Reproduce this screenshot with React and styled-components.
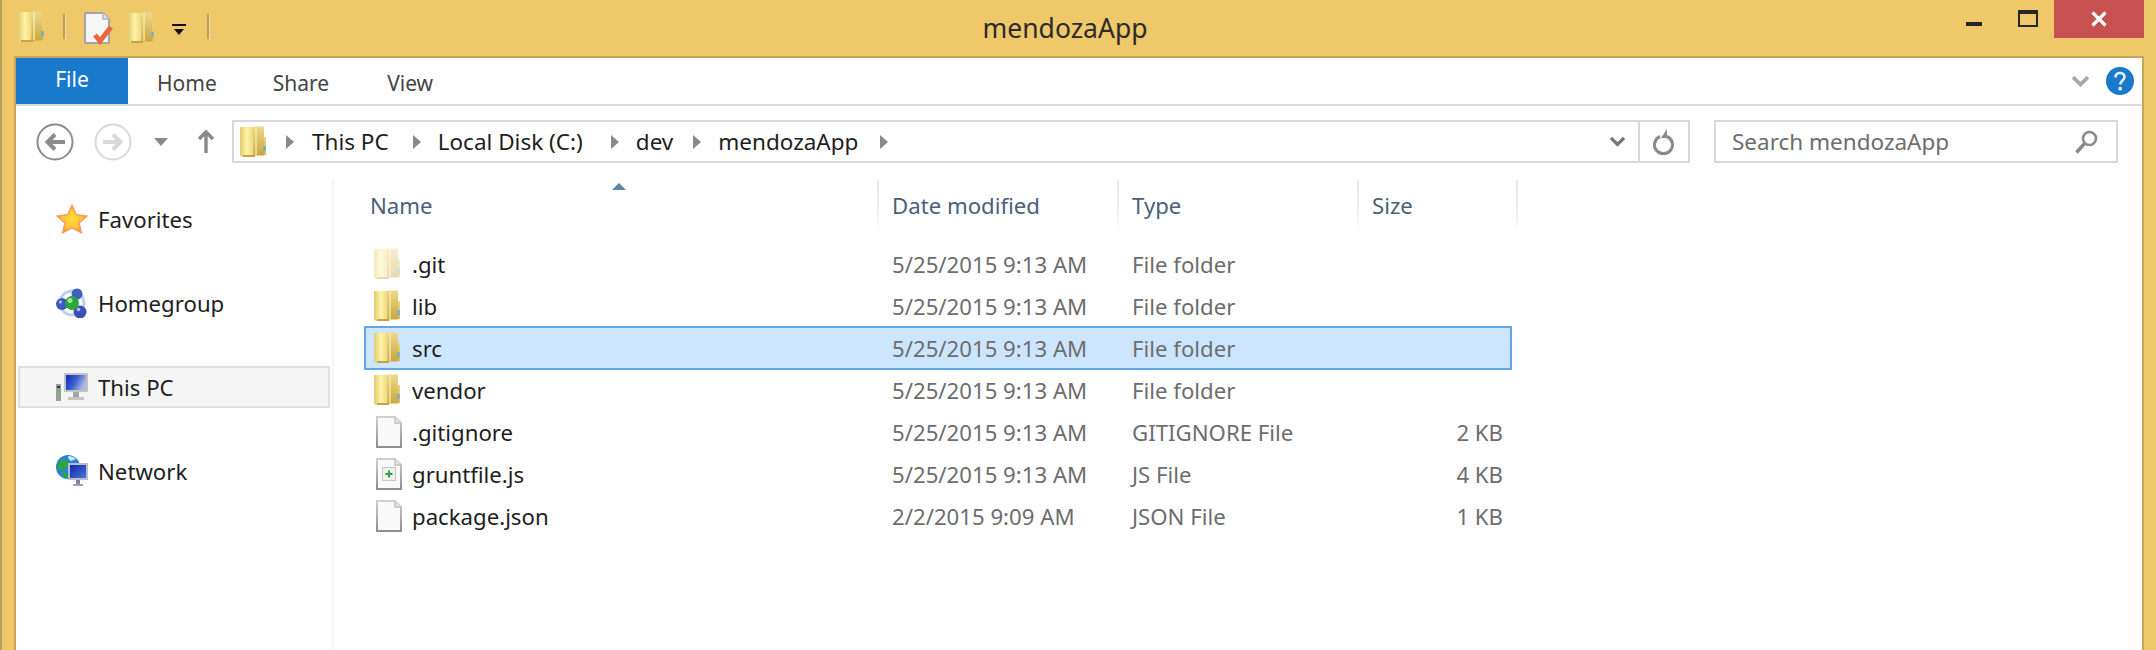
import React from "react";
import styled, { createGlobalStyle } from "styled-components";

const UI_FONT = `"Noto Sans", "Open Sans", "Liberation Sans", sans-serif`;

const GlobalStyle = createGlobalStyle`
  html, body {
    margin: 0;
    padding: 0;
    background: #efc86a;
  }
  body {
    font-family: ${UI_FONT};
  }
`;

const Window = styled.div`
  width: 2156px;
  height: 650px;
  box-sizing: border-box;
  display: flex;
  flex-direction: column;
  overflow: hidden;
  background: #efc86a;
  border-left: 2px solid #b9a05a;
`;

const TitleBar = styled.div`
  height: 56px;
  flex: none;
  display: grid;
  grid-template-columns: 803px 520px 1fr;
  align-items: start;
`;

const QuickAccess = styled.div`
  display: flex;
  align-items: flex-start;
  height: 56px;
  padding-left: 16px;
`;

const QuickSep = styled.div`
  width: 2px;
  height: 25px;
  background: #b99f5c;
  box-shadow: 1px 0 0 #f5dc9d;
  margin: 14px ${(p) => p.$right}px 0 ${(p) => p.$left}px;
`;

const QuickIcon = styled.div`
  display: flex;
  margin-top: ${(p) => p.$top}px;
  margin-left: ${(p) => p.$left || 0}px;
`;

const Title = styled.div`
  font-size: 26.5px;
  line-height: 56px;
  text-align: center;
  color: #2b2b2b;
`;

const WindowControls = styled.div`
  display: flex;
  justify-content: flex-end;
  align-items: flex-start;
  padding-right: 12px;
`;

const MinButton = styled.div`
  width: 16px;
  height: 4px;
  background: #262626;
  margin: 22px 36px 0 0;
`;

const MaxButton = styled.div`
  width: 20px;
  height: 17px;
  box-sizing: border-box;
  background: transparent;
  border: 2px solid #262626;
  border-top-width: 4px;
  margin: 10px 16px 0 0;
`;

const CloseButton = styled.div`
  width: 90px;
  height: 38px;
  background: #c75050;
  display: flex;
  align-items: center;
  justify-content: center;
`;

const Pane = styled.div`
  flex: 1;
  min-height: 0;
  margin: 0 12px;
  display: flex;
  flex-direction: column;
  background: #fff;
  border: 2px solid #c8a657;
  border-bottom: none;
`;

const TabRow = styled.div`
  height: 46px;
  flex: none;
  display: flex;
  align-items: stretch;
  border-bottom: 2px solid #dadbdc;
`;

const FileTab = styled.div`
  width: 112px;
  background: #1979ca;
  color: #fff;
  font-size: 21px;
  display: flex;
  align-items: center;
  justify-content: center;
  padding-bottom: 4px;
  box-sizing: border-box;
`;

const Tab = styled.div`
  color: #444;
  font-size: 21px;
  line-height: 50px;
  margin-left: ${(p) => p.$gap}px;
`;

const RibbonEnd = styled.div`
  margin-left: auto;
  display: flex;
  align-items: center;
  gap: 17px;
  padding: 0 8px 0 0;
`;

const NavRow = styled.div`
  height: 74px;
  flex: none;
  box-sizing: border-box;
  padding: 14px 24px 0 20px;
  display: flex;
  align-items: flex-start;
`;

const NavButtons = styled.div`
  width: 196px;
  height: 43px;
  flex: none;
  display: flex;
  align-items: center;
`;

const Spacer = styled.span`
  width: ${(p) => p.$w}px;
  flex: none;
`;

const AddressBar = styled.div`
  flex: 1;
  height: 43px;
  box-sizing: border-box;
  border: 2px solid #d9d9d9;
  display: flex;
  align-items: center;
  padding-left: 6px;
  color: #1e1e1e;
  font-size: 22.5px;
`;

const Crumb = styled.span`
  margin: 0 ${(p) => p.$after}px 0 ${(p) => p.$before}px;
  white-space: nowrap;
`;

const AddressEnd = styled.div`
  margin-left: auto;
  display: flex;
  align-items: center;
  height: 100%;
`;

const RefreshCell = styled.div`
  width: 50px;
  height: 100%;
  border-left: 2px solid #d9d9d9;
  box-sizing: border-box;
  display: flex;
  align-items: center;
  justify-content: center;
`;

const SearchBox = styled.div`
  width: 404px;
  height: 43px;
  flex: none;
  margin-left: 24px;
  box-sizing: border-box;
  border: 2px solid #d9d9d9;
  padding: 0 18px 0 16px;
  display: flex;
  align-items: center;
  justify-content: space-between;
  color: #6d6d6d;
  font-size: 22.5px;
`;

const Body = styled.div`
  flex: 1;
  min-height: 0;
  display: flex;
`;

const Sidebar = styled.div`
  width: 316px;
  flex: none;
  box-sizing: content-box;
  border-right: 2px solid #f5f6f7;
  padding-top: 18px;
  display: flex;
  flex-direction: column;
  gap: 42px;
`;

const NavItem = styled.div`
  height: 42px;
  width: 312px;
  margin-left: 2px;
  box-sizing: border-box;
  padding-left: 36px;
  display: flex;
  align-items: center;
  gap: 10px;
  color: #1e1e1e;
  font-size: 22.2px;
  background: ${(p) => (p.$active ? "#f5f5f5" : "transparent")};
  border: 2px solid ${(p) => (p.$active ? "#dfdfdf" : "transparent")};
`;

const Content = styled.div`
  flex: 1;
  min-width: 0;
`;

const HeaderRow = styled.div`
  height: 44px;
  display: grid;
  grid-template-columns: 545px 240px 240px 159px;
  margin-bottom: 19px;
`;

const HeaderCell = styled.div`
  position: relative;
  box-sizing: border-box;
  padding-left: ${(p) => p.$pad}px;
  color: #4c607a;
  font-size: 22.2px;
  line-height: 52px;
  border-right: 2px solid transparent;
  border-image: linear-gradient(to bottom, #e3e8ef, #eef2f7 70%, #ffffff) 1;
`;

const SortArrow = styled.div`
  position: absolute;
  left: 278px;
  top: 3px;
  width: 0;
  height: 0;
  border-left: 7px solid transparent;
  border-right: 7px solid transparent;
  border-bottom: 7px solid #5d87a8;
`;

const FileRow = styled.div`
  width: 1148px;
  margin: ${(p) => (p.$selected ? "-1px 0 -1px 30px" : "0 0 0 30px")};
  height: ${(p) => (p.$selected ? 44 : 42)}px;
  box-sizing: border-box;
  display: grid;
  grid-template-columns: 528px 240px 240px 131px;
  align-items: center;
  background: ${(p) => (p.$selected ? "#cde6ff" : "transparent")};
  box-shadow: ${(p) => (p.$selected ? "inset 0 0 0 2px #64a5e6" : "none")};
  font-size: 22.2px;
`;

const NameCell = styled.div`
  display: flex;
  align-items: center;
  padding-left: ${(p) => p.$pad}px;
  color: #1e1e1e;
`;

const IconSlot = styled.span`
  width: ${(p) => 38 - (p.$pad - 10)}px;
  display: flex;
  flex: none;
`;

const MetaCell = styled.div`
  color: #6d6d6d;
  white-space: nowrap;
`;

const SizeCell = styled.div`
  color: #6d6d6d;
  text-align: right;
`;

const FolderIcon = ({ faded }) => (
  <svg width="26" height="32" viewBox="0 0 26 32" style={{ display: "block", opacity: faded ? 0.42 : 1 }}>
    <defs>
      <linearGradient id="leafGrad" x1="0" x2="1" y1="0" y2="0">
        <stop offset="0" stopColor="#e2cb6e" />
        <stop offset="0.5" stopColor="#fff3a6" />
        <stop offset="1" stopColor="#efd67c" />
      </linearGradient>
      <linearGradient id="midGrad" x1="0" x2="0" y1="0" y2="1">
        <stop offset="0" stopColor="#ecd98c" />
        <stop offset="1" stopColor="#c9a63f" />
      </linearGradient>
      <linearGradient id="tabGrad" x1="0" x2="0" y1="0" y2="1">
        <stop offset="0" stopColor="#efd47a" />
        <stop offset="1" stopColor="#d8b750" />
      </linearGradient>
    </defs>
    <path d="M23 11h3v18h-3z" fill="url(#tabGrad)" />
    <path d="M13 0.500h11v29H13z" fill="url(#midGrad)" />
    <path d="M15 1h2v28h-2z" fill="#f7e9a8" opacity="0.7" />
    <path d="M0 1h13.500v29.500l-11 0.500L0 30z" fill="url(#leafGrad)" />
    <rect x="23.500" y="20" width="2" height="5" fill="#5aaede" />
    <rect x="3" y="29" width="12" height="2" fill="#c4a448" />
  </svg>
);

const FileIcon = ({ script }) => (
  <svg width="26" height="32" viewBox="0 0 26 32" style={{ display: "block" }}>
    <defs>
      <linearGradient id="docEdge" x1="0" x2="0" y1="0" y2="1">
        <stop offset="0" stopColor="#cfcfcf" />
        <stop offset="1" stopColor="#8e8e8e" />
      </linearGradient>
    </defs>
    <path d="M1 1h18l6 6v24H1z" fill="#f9f9f9" stroke="url(#docEdge)" strokeWidth="2" />
    <path d="M19 1v6h6" fill="#e6e6e6" stroke="#c4c4c4" strokeWidth="1.500" />
    {script && (
      <g>
        <rect x="6.500" y="9.500" width="13" height="13" fill="#f1f1f1" stroke="#c6c6c6" />
        <path d="M12 12.500h2v2.500h2.500v2H14v2.500h-2V17H9.500v-2H12z" fill="#25a83c" />
      </g>
    )}
  </svg>
);

const NoteIcon = () => (
  <svg width="30" height="33" viewBox="0 0 30 33" style={{ display: "block" }}>
    <path d="M1 1h18l6 6v24H1z" fill="#f6f6f6" stroke="#a5a5a5" strokeWidth="2" />
    <path d="M19 1v6h6" fill="#e6e6e6" stroke="#b5b5b5" strokeWidth="1.500" />
    <path d="M11 23l5 6 11-14" fill="none" stroke="#e7673f" strokeWidth="5" />
  </svg>
);

const StarIcon = () => (
  <svg width="32" height="30" viewBox="0 0 32 30" style={{ flex: "none" }}>
    <defs>
      <radialGradient id="starGrad" cx="0.5" cy="0.5" r="0.55">
        <stop offset="0" stopColor="#ffe13c" />
        <stop offset="0.6" stopColor="#fdbd3c" />
        <stop offset="1" stopColor="#f08a34" />
      </radialGradient>
    </defs>
    <path d="M16 1l4.400 9.600L31 12l-7.800 7 2.300 10L16 24l-9.500 5 2.300-10L1 12l10.600-1.400z" fill="url(#starGrad)" stroke="#ef9c62" strokeWidth="1.200" />
  </svg>
);

const HomegroupIcon = () => (
  <svg width="32" height="30" viewBox="0 0 32 30" style={{ flex: "none" }}>
    <circle cx="16" cy="15" r="12" fill="none" stroke="#bcd3ee" strokeWidth="3" />
    <circle cx="21" cy="6" r="5.500" fill="#3d5fc0" />
    <circle cx="6" cy="16" r="6" fill="#3f58bc" />
    <circle cx="24" cy="24" r="6.500" fill="#3c50b8" />
    <circle cx="16" cy="15" r="7" fill="#2aa63a" />
    <circle cx="14" cy="12.500" r="2.500" fill="#a6e0a8" />
    <circle cx="4.500" cy="14" r="1.600" fill="#b0c0ee" />
    <circle cx="22.500" cy="21.500" r="1.800" fill="#b0c0ee" />
  </svg>
);

const ComputerIcon = () => (
  <svg width="32" height="28" viewBox="0 0 32 28" style={{ flex: "none" }}>
    <defs>
      <linearGradient id="screenGrad" x1="0" x2="1" y1="0" y2="0.4">
        <stop offset="0" stopColor="#0c2bb8" />
        <stop offset="0.55" stopColor="#3c62cc" />
        <stop offset="1" stopColor="#a9b9e2" />
      </linearGradient>
    </defs>
    <rect x="0" y="11" width="5" height="17" fill="#9d9d9d" />
    <rect x="1" y="13" width="3" height="2" fill="#3a3a3a" />
    <rect x="1" y="16" width="3" height="3" fill="#5fc24b" />
    <rect x="8" y="0" width="24" height="19" fill="#c3c3c3" />
    <rect x="10" y="2" width="20" height="15" fill="url(#screenGrad)" />
    <rect x="17" y="19" width="6" height="5" fill="#a4a4a4" />
    <rect x="12" y="24" width="16" height="3" fill="#c6c6c6" />
  </svg>
);

const NetworkIcon = () => (
  <svg width="32" height="32" viewBox="0 0 32 32" style={{ flex: "none" }}>
    <defs>
      <linearGradient id="netScreen" x1="0" x2="1" y1="0" y2="1">
        <stop offset="0" stopColor="#0b2ab5" />
        <stop offset="1" stopColor="#4f70d0" />
      </linearGradient>
    </defs>
    <circle cx="12" cy="12" r="12" fill="#2f7fd8" />
    <path d="M4 6c4-3 7-2 8 1s-1 6-4 7-5 2-7 0c0-3 1-6 3-8z" fill="#29a83f" />
    <path d="M6 17c3 0 5 1 6 3s0 3-2 3c-3-1-4-3-4-6z" fill="#29a83f" />
    <path d="M12 1c3 0 6 1 8 3l-5 2c-2-1-3-3-3-5z" fill="#c8ecff" />
    <rect x="12" y="8" width="20" height="17" fill="#b9bfca" />
    <rect x="14" y="10" width="16" height="13" fill="url(#netScreen)" />
    <rect x="20" y="25" width="4" height="4" fill="#7d8698" />
    <rect x="17" y="29" width="10" height="2" fill="#9aa2b0" />
  </svg>
);

const CircleArrow = ({ dir, tone }) => (
  <svg width="38" height="38" viewBox="0 0 38 38" style={{ flex: "none", transform: dir === "right" ? "scaleX(-1)" : "none" }}>
    <circle cx="19" cy="19" r="17.500" fill="none" stroke={tone} strokeWidth="2" />
    <path d="M29 19H12M19 11.500L11.500 19l7.500 7.500" fill="none" stroke={tone} strokeWidth="4" />
  </svg>
);

const Triangle = ({ color = "#8a8a8a" }) => (
  <svg width="8" height="14" viewBox="0 0 8 14" style={{ flex: "none" }}>
    <path d="M0 0l8 7-8 7z" fill={color} />
  </svg>
);

const Chevron = ({ size = 14, color = "#8a8a8a", width = 3.5 }) => (
  <svg width={size} height={size * 0.75} viewBox="0 0 16 12" style={{ flex: "none" }}>
    <path d="M1 2l7 7 7-7" fill="none" stroke={color} strokeWidth={width} />
  </svg>
);

const folders = [
  { name: ".git", date: "5/25/2015 9:13 AM", type: "File folder", faded: true },
  { name: "lib", date: "5/25/2015 9:13 AM", type: "File folder" },
  { name: "src", date: "5/25/2015 9:13 AM", type: "File folder", selected: true },
  { name: "vendor", date: "5/25/2015 9:13 AM", type: "File folder" },
];

const files = [
  { name: ".gitignore", date: "5/25/2015 9:13 AM", type: "GITIGNORE File", size: "2 KB" },
  { name: "gruntfile.js", date: "5/25/2015 9:13 AM", type: "JS File", size: "4 KB", script: true },
  { name: "package.json", date: "2/2/2015 9:09 AM", type: "JSON File", size: "1 KB" },
];

const crumbs = [
  { label: "This PC", before: 18, after: 24 },
  { label: "Local Disk (C:)", before: 17, after: 28 },
  { label: "dev", before: 17, after: 20 },
  { label: "mendozaApp", before: 17, after: 22 },
];

export default function App() {
  return (
    <Window>
      <GlobalStyle />
      <TitleBar>
        <QuickAccess>
          <QuickIcon $top={11}><FolderIcon /></QuickIcon>
          <QuickSep $left={19} $right={19} />
          <QuickIcon $top={12}><NoteIcon /></QuickIcon>
          <QuickIcon $top={12} $left={14}><FolderIcon /></QuickIcon>
          <QuickIcon $top={24} $left={18}>
            <svg width="14" height="12" viewBox="0 0 14 12">
              <rect x="0" y="0" width="14" height="2" fill="#111" />
              <path d="M2 5h10l-5 6z" fill="#111" />
            </svg>
          </QuickIcon>
          <QuickSep $left={21} $right={0} />
        </QuickAccess>
        <Title>mendozaApp</Title>
        <WindowControls>
          <MinButton />
          <MaxButton />
          <CloseButton>
            <svg width="16" height="16" viewBox="0 0 16 16">
              <path d="M1.500 1.500l13 13M14.500 1.500l-13 13" stroke="#fff" strokeWidth="3.2" />
            </svg>
          </CloseButton>
        </WindowControls>
      </TitleBar>
      <Pane>
        <TabRow>
          <FileTab>File</FileTab>
          <Tab $gap={29}>Home</Tab>
          <Tab $gap={56}>Share</Tab>
          <Tab $gap={58}>View</Tab>
          <RibbonEnd>
            <Chevron size={17} color="#a9a9a9" width={3.5} />
            <svg width="28" height="28" viewBox="0 0 28 28">
              <circle cx="14" cy="14" r="14" fill="#1979ca" />
              <path d="M9.500 10.500c0-3 2-4.500 4.500-4.500s4.500 1.500 4.500 4c0 3.500-4.200 3.600-4.200 7.500" fill="none" stroke="#e6f1fb" strokeWidth="2.6" />
              <rect x="12.600" y="20" width="3.200" height="3.400" fill="#e6f1fb" />
            </svg>
          </RibbonEnd>
        </TabRow>
        <NavRow>
          <NavButtons>
            <CircleArrow dir="left" tone="#8c8c8c" />
            <Spacer $w={20} />
            <CircleArrow dir="right" tone="#d9d9d9" />
            <Spacer $w={22} />
            <svg width="14" height="8" viewBox="0 0 14 8" style={{ flex: "none" }}>
              <path d="M0 0h14L7 8z" fill="#8a8a8a" />
            </svg>
            <Spacer $w={30} />
            <svg width="16" height="25" viewBox="0 0 16 25" style={{ flex: "none" }}>
              <path d="M8 24V3M1 10l7-7 7 7" fill="none" stroke="#8a8a8a" strokeWidth="3.4" />
            </svg>
          </NavButtons>
          <AddressBar>
            <FolderIcon />
            <Spacer $w={20} />
            {crumbs.map((crumb) => (
              <React.Fragment key={crumb.label}>
                <Triangle />
                <Crumb $before={crumb.before} $after={crumb.after}>{crumb.label}</Crumb>
              </React.Fragment>
            ))}
            <Triangle />
            <AddressEnd>
              <Chevron size={15} color="#777" />
              <Spacer $w={13} />
              <RefreshCell>
                <svg width="22" height="26" viewBox="0 0 22 26">
                  <path d="M7 7.500a9 9 0 1 0 7 0" fill="none" stroke="#8a8a8a" strokeWidth="3" />
                  <path d="M14 0v9h-6z" fill="#8a8a8a" />
                </svg>
              </RefreshCell>
            </AddressEnd>
          </AddressBar>
          <SearchBox>
            <span>Search mendozaApp</span>
            <svg width="23" height="24" viewBox="0 0 23 24">
              <circle cx="14.500" cy="8.500" r="6.500" fill="none" stroke="#8a8a8a" strokeWidth="2.6" />
              <path d="M9.500 13.500L1.500 22.500" stroke="#8a8a8a" strokeWidth="3.4" />
            </svg>
          </SearchBox>
        </NavRow>
        <Body>
          <Sidebar>
            <NavItem><StarIcon /><span>Favorites</span></NavItem>
            <NavItem><HomegroupIcon /><span>Homegroup</span></NavItem>
            <NavItem $active><ComputerIcon /><span>This PC</span></NavItem>
            <NavItem><NetworkIcon /><span>Network</span></NavItem>
          </Sidebar>
          <Content>
            <HeaderRow>
              <HeaderCell $pad={36}>
                <SortArrow />
                Name
              </HeaderCell>
              <HeaderCell $pad={13}>Date modified</HeaderCell>
              <HeaderCell $pad={13}>Type</HeaderCell>
              <HeaderCell $pad={13}>Size</HeaderCell>
            </HeaderRow>
            {folders.map((f) => (
              <FileRow key={f.name} $selected={f.selected}>
                <NameCell $pad={10}>
                  <IconSlot $pad={10}><FolderIcon faded={f.faded} /></IconSlot>
                  {f.name}
                </NameCell>
                <MetaCell>{f.date}</MetaCell>
                <MetaCell>{f.type}</MetaCell>
                <SizeCell />
              </FileRow>
            ))}
            {files.map((f) => (
              <FileRow key={f.name}>
                <NameCell $pad={12}>
                  <IconSlot $pad={12}><FileIcon script={f.script} /></IconSlot>
                  {f.name}
                </NameCell>
                <MetaCell>{f.date}</MetaCell>
                <MetaCell>{f.type}</MetaCell>
                <SizeCell>{f.size}</SizeCell>
              </FileRow>
            ))}
          </Content>
        </Body>
      </Pane>
    </Window>
  );
}
